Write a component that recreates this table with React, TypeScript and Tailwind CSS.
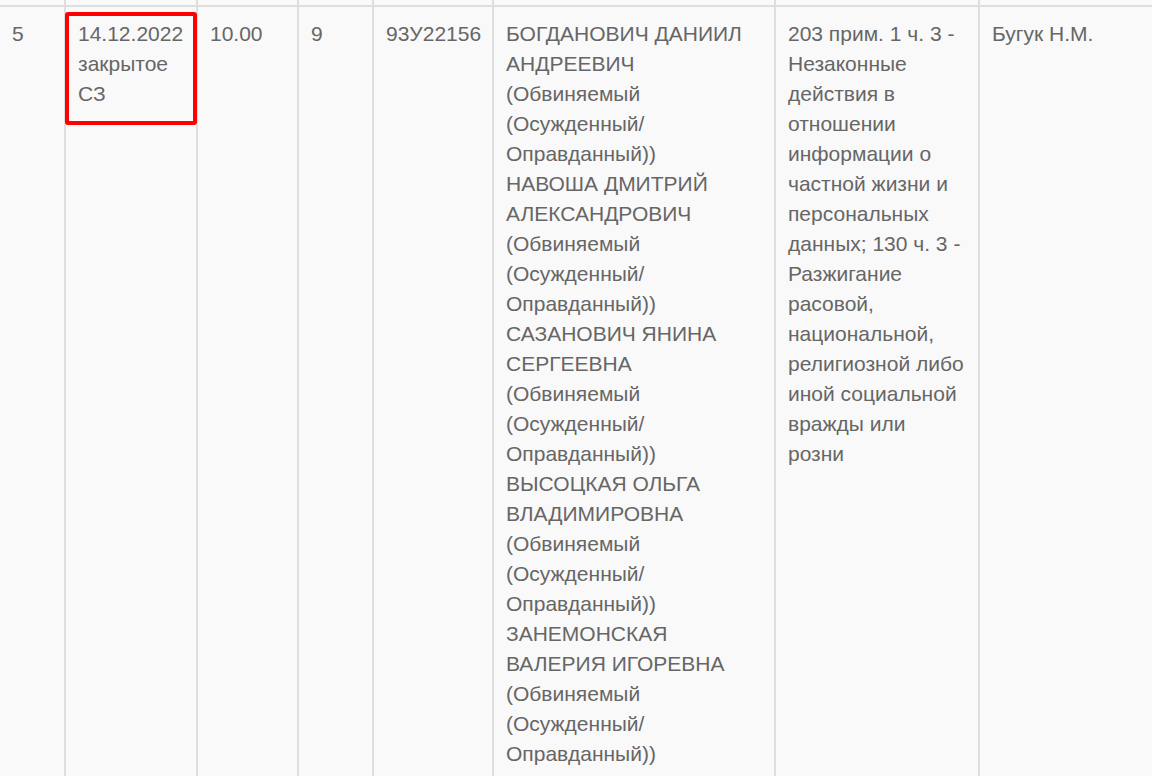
import React from "react";

const cols = "grid-cols-[64px_132px_101px_75px_120px_282px_204px_1fr]";

const defendants = [
  "БОГДАНОВИЧ ДАНИИЛ АНДРЕЕВИЧ",
  "НАВОША ДМИТРИЙ АЛЕКСАНДРОВИЧ",
  "САЗАНОВИЧ ЯНИНА СЕРГЕЕВНА",
  "ВЫСОЦКАЯ ОЛЬГА ВЛАДИМИРОВНА",
  "ЗАНЕМОНСКАЯ ВАЛЕРИЯ ИГОРЕВНА",
];

function Cell({ first, children }: { first?: boolean; children?: React.ReactNode }) {
  return (
    <div
      className={`border-t-2 border-[#dedede] px-[12px] pt-[12px] pb-[12px] ${
        first ? "" : "border-l-2"
      }`}
    >
      {children}
    </div>
  );
}

export default function App() {
  return (
    <div
      className="relative min-h-screen w-[1152px] overflow-hidden bg-[#f9f9f9] text-[21px] leading-[30px] text-[#666]"
      style={{ fontFamily: '"Liberation Sans", Arial, sans-serif' }}
    >
      {/* tail of the previous row */}
      <div className={`grid h-[5px] ${cols}`}>
        {Array.from({ length: 8 }).map((_, i) => (
          <div key={i} className={i === 0 ? "" : "border-l-2 border-[#dedede]"} />
        ))}
      </div>

      <div className={`grid ${cols}`}>
        <Cell first>5</Cell>
        <Cell>14.12.2022 закрытое СЗ</Cell>
        <Cell>10.00</Cell>
        <Cell>9</Cell>
        <Cell>93У22156</Cell>
        <Cell>
          {defendants.map((name) => (
            <div key={name}>
              {name} (Обвиняемый (Осужденный/ Оправданный))
            </div>
          ))}
        </Cell>
        <Cell>
          203 прим. 1 ч. 3 - Незаконные действия в отношении информации о частной жизни и
          персональных данных; 130 ч. 3 - Разжигание расовой, национальной, религиозной либо
          иной социальной вражды или розни
        </Cell>
        <Cell>Бугук Н.М.</Cell>
      </div>

      {/* highlight annotation */}
      <div className="pointer-events-none absolute left-[65px] top-[12px] h-[113px] w-[132px] rounded-[3px] border-[4px] border-[#f00]" />
    </div>
  );
}
